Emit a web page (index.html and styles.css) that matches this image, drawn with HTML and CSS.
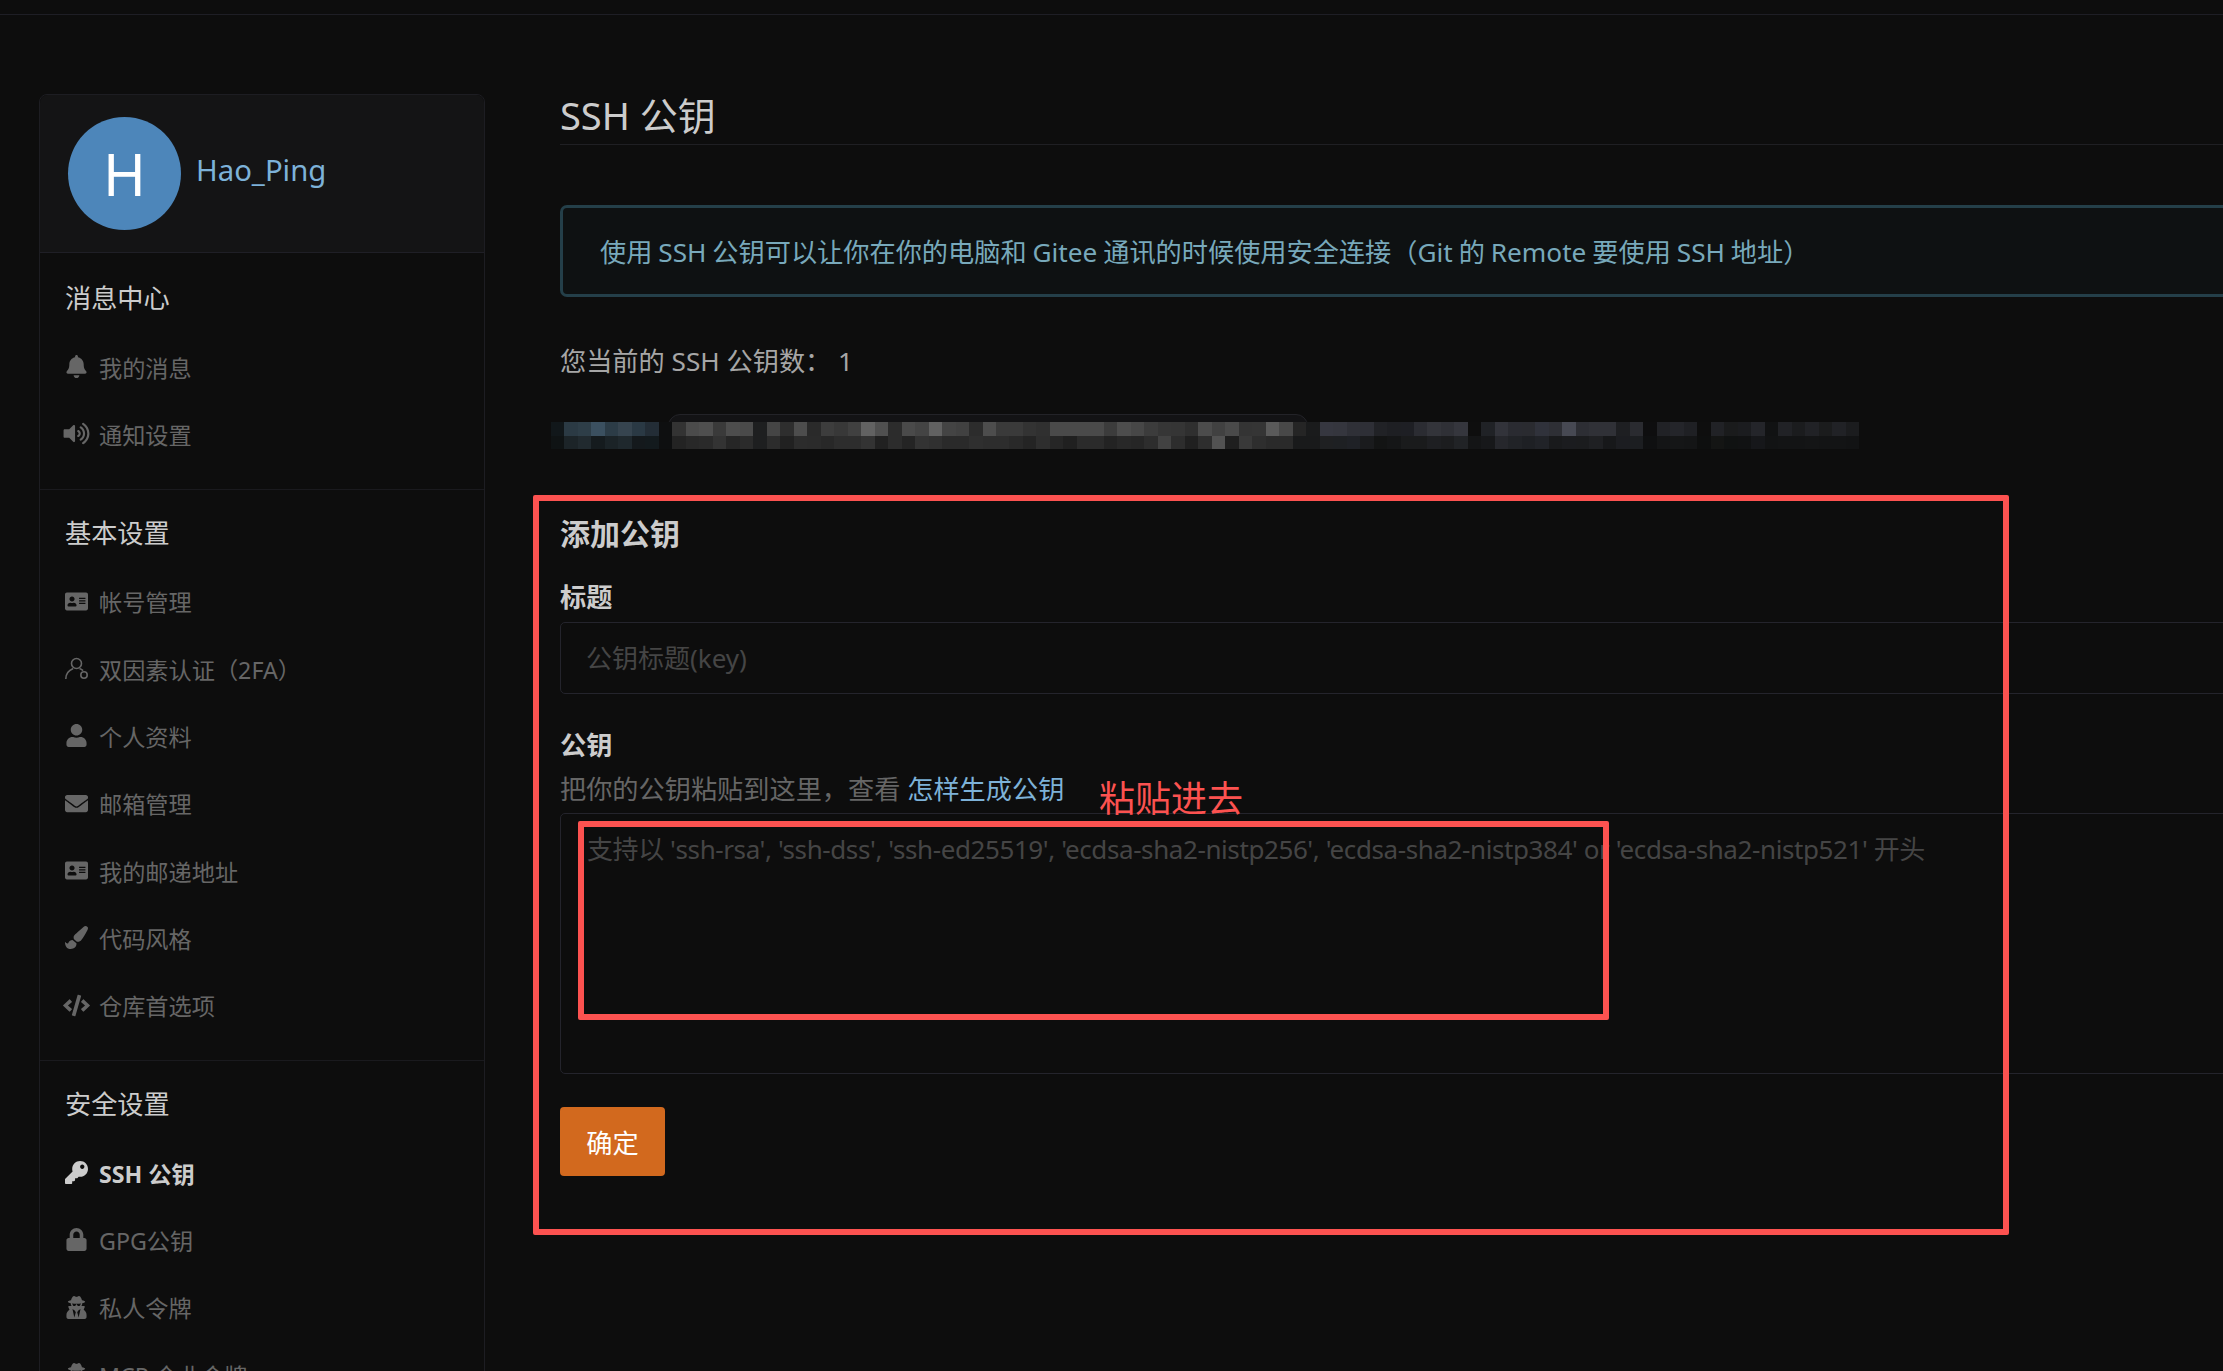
FILE: index.html
```html
<!DOCTYPE html>
<html lang="zh-CN">
<head>
<meta charset="utf-8">
<title>SSH 公钥</title>
<link rel="stylesheet" href="styles.css">
</head>
<body>
<svg class="defs" aria-hidden="true">
  <symbol id="i-bell" viewBox="0 0 448 512"><path d="M224 512c35.32 0 63.97-28.65 63.97-63.97H160.03C160.03 483.35 188.68 512 224 512zm215.39-149.71c-19.32-20.76-55.47-51.99-55.47-154.29 0-77.7-54.48-139.9-127.94-155.16V32c0-17.67-14.32-32-31.98-32s-31.98 14.33-31.98 32v20.84C118.56 68.1 64.08 130.3 64.08 208c0 102.3-36.15 133.53-55.47 154.29-6 6.45-8.66 14.16-8.61 21.71.11 16.4 12.98 32 32.1 32h383.8c19.12 0 32-15.6 32.1-32 .05-7.55-2.61-15.27-8.61-21.71z"/></symbol>
  <symbol id="i-volume" viewBox="0 0 576 512"><path d="M215.03 71.05L126.06 160H24c-13.26 0-24 10.74-24 24v144c0 13.25 10.74 24 24 24h102.06l88.97 88.95c15.03 15.03 40.97 4.47 40.97-16.97V88.02c0-21.46-25.96-31.98-40.97-16.97zm233.32-51.08c-11.17-7.33-26.18-4.24-33.51 6.95-7.34 11.17-4.22 26.18 6.95 33.51 66.27 43.49 105.82 116.6 105.82 195.58 0 78.98-39.55 152.09-105.82 195.58-11.17 7.32-14.29 22.34-6.95 33.5 7.04 10.71 21.93 14.56 33.51 6.95C528.27 439.58 576 351.33 576 256S528.27 72.43 448.35 19.97zM480 256c0-63.53-32.06-121.94-85.77-156.24-11.19-7.14-26.03-3.82-33.12 7.46s-3.78 26.21 7.41 33.36C408.27 165.97 432 209.11 432 256s-23.73 90.03-63.48 115.42c-11.19 7.14-14.5 22.07-7.41 33.36 6.51 10.36 21.12 15.14 33.12 7.46C447.94 377.94 480 319.53 480 256zm-141.77-76.87c-11.58-6.33-26.19-2.16-32.61 9.45-6.39 11.61-2.16 26.2 9.45 32.61C327.98 228.28 336 241.63 336 256c0 14.38-8.02 27.72-20.92 34.81-11.61 6.41-15.84 21-9.45 32.61 6.43 11.66 21.05 15.8 32.61 9.45 28.23-15.55 45.77-45 45.77-76.88s-17.54-61.32-45.78-76.86z"/></symbol>
  <symbol id="i-card" viewBox="0 0 576 512"><path d="M528 32H48C21.5 32 0 53.5 0 80v352c0 26.5 21.5 48 48 48h480c26.5 0 48-21.5 48-48V80c0-26.5-21.5-48-48-48zm-352 96c35.3 0 64 28.7 64 64s-28.7 64-64 64-64-28.7-64-64 28.7-64 64-64zm112 236.8c0 10.6-10 19.2-22.4 19.2H86.4C74 384 64 375.4 64 364.8v-19.2c0-31.8 30.1-57.6 67.2-57.6h5c12.3 5.1 25.7 8 39.8 8s27.6-2.9 39.8-8h5c37.1 0 67.2 25.8 67.2 57.6v19.2zM512 312c0 4.4-3.6 8-8 8H360c-4.4 0-8-3.6-8-8v-16c0-4.4 3.6-8 8-8h144c4.4 0 8 3.6 8 8v16zm0-64c0 4.4-3.6 8-8 8H360c-4.4 0-8-3.6-8-8v-16c0-4.4 3.6-8 8-8h144c4.4 0 8 3.6 8 8v16zm0-64c0 4.4-3.6 8-8 8H360c-4.4 0-8-3.6-8-8v-16c0-4.4 3.6-8 8-8h144c4.4 0 8 3.6 8 8v16z"/></symbol>
  <symbol id="i-2fa" viewBox="0 0 23 23"><g fill="none" stroke="currentColor" stroke-width="1.6"><circle cx="11.5" cy="6.5" r="5"/><path d="M.8 22c0-5 3-8.6 7.4-10.4M14.5 11.4c1.4.5 2.6 1.3 3.6 2.2"/><circle cx="19" cy="18" r="3.2"/></g></symbol>
  <symbol id="i-user" viewBox="0 0 448 512"><path d="M224 256c70.7 0 128-57.3 128-128S294.7 0 224 0 96 57.3 96 128s57.3 128 128 128zm89.6 32h-16.7c-22.2 10.2-46.9 16-72.9 16s-50.6-5.8-72.9-16h-16.7C60.2 288 0 348.2 0 422.4V464c0 26.5 21.5 48 48 48h352c26.5 0 48-21.5 48-48v-41.6c0-74.2-60.2-134.4-134.4-134.4z"/></symbol>
  <symbol id="i-mail" viewBox="0 0 512 512"><path d="M502.3 190.8c3.9-3.1 9.7-.2 9.7 4.7V400c0 26.5-21.5 48-48 48H48c-26.5 0-48-21.5-48-48V195.6c0-5 5.7-7.8 9.7-4.7 22.4 17.4 52.1 39.5 154.1 113.6 21.1 15.4 56.7 47.8 92.2 47.6 35.7.3 72-32.8 92.3-47.6 102-74.1 131.6-96.3 154-113.7zM256 320c23.2.4 56.6-29.2 73.4-41.4 132.7-96.3 142.8-104.7 173.4-128.7 5.8-4.5 9.2-11.5 9.2-18.9v-19c0-26.5-21.5-48-48-48H48C21.5 64 0 85.5 0 112v19c0 7.4 3.4 14.3 9.2 18.9 30.6 23.9 40.7 32.4 173.4 128.7 16.8 12.2 50.2 41.8 73.4 41.4z"/></symbol>
  <symbol id="i-brush" viewBox="0 0 512 512"><path d="M167.02 309.34c-40.12 2.58-76.53 17.86-97.19 72.3-2.35 6.21-8 9.98-14.59 9.98-11.11 0-45.46-27.67-55.25-34.35C0 439.62 37.93 512 128 512c75.86 0 128-43.77 128-120.19 0-3.11-.65-6.08-.97-9.13l-88.01-73.34zM457.89 0c-15.16 0-29.37 6.71-40.21 16.45C213.27 199.05 192 203.34 192 257.09c0 13.7 3.25 26.76 8.73 38.7l63.82 53.18c7.21 1.8 14.64 3.03 22.39 3.03 62.11 0 98.11-45.47 211.16-256.46 7.38-14.35 13.9-29.85 13.9-45.99C512 20.64 486 0 457.89 0z"/></symbol>
  <symbol id="i-code" viewBox="0 0 640 512"><path d="M278.9 511.5l-61-17.7c-6.4-1.8-10-8.5-8.2-14.9L346.2 8.7c1.8-6.4 8.5-10 14.9-8.2l61 17.7c6.4 1.8 10 8.5 8.2 14.9L293.8 503.3c-1.9 6.4-8.5 10.1-14.9 8.2zm-114-112.2l43.5-46.4c4.6-4.9 4.3-12.7-.8-17.2L117 256l90.6-79.7c5.1-4.5 5.5-12.3.8-17.2l-43.5-46.4c-4.5-4.8-12.1-5.1-17-.5L3.8 247.2c-5.1 4.7-5.1 12.8 0 17.5l144.1 135.1c4.9 4.6 12.5 4.4 17-.5zm327.2.6l144.1-135.1c5.1-4.7 5.1-12.8 0-17.5L492.1 112.1c-4.8-4.5-12.4-4.3-17 .5L431.6 159c-4.6 4.9-4.3 12.7.8 17.2L523 256l-90.6 79.7c-5.1 4.5-5.5 12.3-.8 17.2l43.5 46.4c4.5 4.9 12.1 5.1 17 .6z"/></symbol>
  <symbol id="i-key" viewBox="0 0 512 512"><path d="M512 176.001C512 273.203 433.202 352 336 352c-11.22 0-22.19-1.062-32.827-3.069l-24.012 27.014A23.999 23.999 0 0 1 261.223 384H224v40c0 13.255-10.745 24-24 24h-40v40c0 13.255-10.745 24-24 24H24c-13.255 0-24-10.745-24-24v-78.059c0-6.365 2.529-12.47 7.029-16.971l161.802-161.802C163.108 213.814 160 195.271 160 176 160 78.798 238.797.001 335.999 0 433.488-.001 512 78.511 512 176.001zM336 128c0 26.51 21.49 48 48 48s48-21.49 48-48-21.49-48-48-48-48 21.49-48 48z"/></symbol>
  <symbol id="i-lock" viewBox="0 0 448 512"><path d="M400 224h-24v-72C376 68.2 307.8 0 224 0S72 68.2 72 152v72H48c-26.5 0-48 21.5-48 48v192c0 26.5 21.5 48 48 48h352c26.5 0 48-21.5 48-48V272c0-26.5-21.5-48-48-48zm-104 0H152v-72c0-39.7 32.3-72 72-72s72 32.3 72 72v72z"/></symbol>
  <symbol id="i-secret" viewBox="0 0 448 512"><path d="M383.9 308.3l23.9-62.6c4-10.5-3.7-21.7-15-21.7h-58.5c11-18.9 17.8-40.6 17.8-64v-.3c39.2-7.8 64-19.1 64-31.7 0-13.3-27.3-25.1-70.1-33-9.2-32.8-27-65.8-40.6-82.8-9.5-11.9-25.9-15.6-39.5-8.8l-27.6 13.8c-9 4.5-19.6 4.5-28.6 0L182.1 3.4c-13.6-6.8-30-3.1-39.5 8.8-13.5 17-31.4 50-40.6 82.8-42.7 7.9-70 19.7-70 33 0 12.6 24.8 23.9 64 31.7v.3c0 23.4 6.8 45.1 17.8 64H56.3c-11.5 0-19.2 11.7-14.7 22.3l25.8 60.2C27.3 329.8 0 372.7 0 422.4v44.8C0 491.9 20.1 512 44.8 512h358.4c24.7 0 44.8-20.1 44.8-44.8v-44.8c0-48.4-25.8-90.4-64.1-114.1zM176 480l-41.6-192 49.6 32 24 40-32 120zm96 0l-32-120 24-40 49.6-32L272 480zm41.7-298.5c-3.9 11.9-7 24.6-16.5 33.4-10.1 9.3-48 22.4-64-25-2.8-8.4-15.4-8.4-18.3 0-17 50.2-56 32.4-64 25-9.5-8.8-12.7-21.5-16.5-33.4-.8-2.5-6.3-5.7-6.3-5.8v-10.8c28.3 3.6 61 5.8 96 5.8s67.7-2.1 96-5.8v10.8c-.1.1-5.6 3.2-6.4 5.8z"/></symbol>
</svg>

<div class="topbar"></div>

<div class="page">
  <aside class="sidebar">
    <header class="profile">
      <span class="avatar">H</span>
      <a class="username" href="#">Hao_Ping</a>
    </header>

    <section class="group group-first">
      <h3 class="group-title">消息中心</h3>
      <a class="item" href="#"><svg class="icon"><use href="#i-bell"/></svg>我的消息</a>
      <a class="item" href="#"><svg class="icon icon-wide"><use href="#i-volume"/></svg>通知设置</a>
    </section>

    <section class="group">
      <h3 class="group-title">基本设置</h3>
      <a class="item" href="#"><svg class="icon"><use href="#i-card"/></svg>帐号管理</a>
      <a class="item" href="#"><svg class="icon"><use href="#i-2fa"/></svg>双因素认证（2FA）</a>
      <a class="item" href="#"><svg class="icon"><use href="#i-user"/></svg>个人资料</a>
      <a class="item" href="#"><svg class="icon"><use href="#i-mail"/></svg>邮箱管理</a>
      <a class="item" href="#"><svg class="icon"><use href="#i-card"/></svg>我的邮递地址</a>
      <a class="item" href="#"><svg class="icon"><use href="#i-brush"/></svg>代码风格</a>
      <a class="item" href="#"><svg class="icon icon-wide"><use href="#i-code"/></svg>仓库首选项</a>
    </section>

    <section class="group">
      <h3 class="group-title">安全设置</h3>
      <a class="item item-active" href="#"><svg class="icon"><use href="#i-key"/></svg>SSH 公钥</a>
      <a class="item" href="#"><svg class="icon"><use href="#i-lock"/></svg>GPG公钥</a>
      <a class="item" href="#"><svg class="icon"><use href="#i-secret"/></svg>私人令牌</a>
      <a class="item" href="#"><svg class="icon"><use href="#i-secret"/></svg>MCP 企业令牌</a>
    </section>
  </aside>

  <main class="main">
    <h1 class="page-title">SSH 公钥</h1>

    <div class="alert">使用 SSH 公钥可以让你在你的电脑和 Gitee 通讯的时候使用安全连接（Git 的 Remote 要使用 SSH 地址）</div>

    <p class="key-count">您当前的 SSH 公钥数： 1</p>

    <div class="key-row">
      <div class="key-tag"></div>
      <svg class="mosaic" viewBox="0 0 97 2" preserveAspectRatio="none" aria-hidden="true">
        <g>
          <rect x="0" fill="#11171a"/><rect x="1" fill="#2b3a44"/><rect x="2" fill="#2e3e48"/><rect x="3" fill="#3b5060"/><rect x="4" fill="#2c3c47"/><rect x="5" fill="#36444f"/><rect x="6" fill="#2a3944"/><rect x="7" fill="#232d36"/><rect x="8" fill="#0e0f10"/><rect x="9" fill="#333333"/>
          <rect x="10" fill="#4b4b4b"/><rect x="11" fill="#4f4f4f"/><rect x="12" fill="#3a3a3a"/><rect x="13" fill="#4d4d4d"/><rect x="14" fill="#4a4a4a"/><rect x="15" fill="#1e1f20"/><rect x="16" fill="#454545"/><rect x="17" fill="#2e2e2e"/><rect x="18" fill="#4d4d4d"/><rect x="19" fill="#2a2a2a"/>
          <rect x="20" fill="#3d3d3d"/><rect x="21" fill="#383838"/><rect x="22" fill="#404040"/><rect x="23" fill="#626262"/><rect x="24" fill="#505050"/><rect x="25" fill="#2c2c2c"/><rect x="26" fill="#4a4a4a"/><rect x="27" fill="#444444"/><rect x="28" fill="#616161"/><rect x="29" fill="#444444"/>
          <rect x="30" fill="#414141"/><rect x="31" fill="#2c2c2c"/><rect x="32" fill="#4d4d4d"/><rect x="33" fill="#3a3a3a"/><rect x="34" fill="#3a3a3a"/><rect x="35" fill="#333333"/><rect x="36" fill="#303030"/><rect x="37" fill="#4a4a4a"/><rect x="38" fill="#4a4a4a"/><rect x="39" fill="#4a4a4a"/>
          <rect x="40" fill="#4a4a4a"/><rect x="41" fill="#3c3c3c"/><rect x="42" fill="#4d4d4d"/><rect x="43" fill="#474747"/><rect x="44" fill="#3c3c3c"/><rect x="45" fill="#363636"/><rect x="46" fill="#353535"/><rect x="47" fill="#2f2f2f"/><rect x="48" fill="#4c4c4c"/><rect x="49" fill="#414141"/>
          <rect x="50" fill="#4a4a4a"/><rect x="51" fill="#343434"/><rect x="52" fill="#353535"/><rect x="53" fill="#5a5a5a"/><rect x="54" fill="#484848"/><rect x="55" fill="#252525"/><rect x="56" fill="#1a1b1c"/><rect x="57" fill="#363740"/><rect x="58" fill="#35363e"/><rect x="59" fill="#2f3037"/>
          <rect x="60" fill="#2e2f36"/><rect x="61" fill="#212226"/><rect x="62" fill="#1e1f23"/><rect x="63" fill="#1e1f24"/><rect x="64" fill="#2b2c32"/><rect x="65" fill="#33343a"/><rect x="66" fill="#2f3036"/><rect x="67" fill="#35363d"/><rect x="68" fill="#0e0e0e"/><rect x="69" fill="#202226"/>
          <rect x="70" fill="#32333a"/><rect x="71" fill="#2a2b31"/><rect x="72" fill="#2a2b30"/><rect x="73" fill="#30323b"/><rect x="74" fill="#2e2f35"/><rect x="75" fill="#474953"/><rect x="76" fill="#2d2e34"/><rect x="77" fill="#303137"/><rect x="78" fill="#303137"/><rect x="79" fill="#1e1f22"/>
          <rect x="80" fill="#2a2b30"/><rect x="81" fill="#0e0e0f"/><rect x="82" fill="#212226"/><rect x="83" fill="#24252a"/><rect x="84" fill="#1f2024"/><rect x="85" fill="#0e0e0e"/><rect x="86" fill="#212226"/><rect x="87" fill="#1a1b1c"/><rect x="88" fill="#1b1c1f"/><rect x="89" fill="#24252a"/>
          <rect x="90" fill="#111213"/><rect x="91" fill="#212226"/><rect x="92" fill="#1b1c1e"/><rect x="93" fill="#212226"/><rect x="94" fill="#1b1c1d"/><rect x="95" fill="#212226"/><rect x="96" fill="#1b1c1e"/>
        </g>
        <g transform="translate(0 1)">
          <rect x="0" fill="#0f1314"/><rect x="1" fill="#1c2428"/><rect x="2" fill="#212a2f"/><rect x="3" fill="#151b1e"/><rect x="4" fill="#1b2327"/><rect x="5" fill="#1f282d"/><rect x="6" fill="#14191c"/><rect x="7" fill="#131a1d"/><rect x="8" fill="#0e0f10"/><rect x="9" fill="#232323"/>
          <rect x="10" fill="#282828"/><rect x="11" fill="#2a2a2a"/><rect x="12" fill="#333333"/><rect x="13" fill="#262626"/><rect x="14" fill="#2b2b2b"/><rect x="15" fill="#1e1f20"/><rect x="16" fill="#2c2c2c"/><rect x="17" fill="#212121"/><rect x="18" fill="#2c2c2c"/><rect x="19" fill="#2b2b2b"/>
          <rect x="20" fill="#282828"/><rect x="21" fill="#2d2d2d"/><rect x="22" fill="#2d2d2d"/><rect x="23" fill="#333333"/><rect x="24" fill="#212121"/><rect x="25" fill="#2c2c2c"/><rect x="26" fill="#242424"/><rect x="27" fill="#333333"/><rect x="28" fill="#303030"/><rect x="29" fill="#2a2a2a"/>
          <rect x="30" fill="#2a2a2a"/><rect x="31" fill="#2f2f2f"/><rect x="32" fill="#2d2d2d"/><rect x="33" fill="#2d2d2d"/><rect x="34" fill="#292929"/><rect x="35" fill="#242424"/><rect x="36" fill="#2e2e2e"/><rect x="37" fill="#262626"/><rect x="38" fill="#202020"/><rect x="39" fill="#2b2b2b"/>
          <rect x="40" fill="#2b2b2b"/><rect x="41" fill="#232323"/><rect x="42" fill="#282828"/><rect x="43" fill="#262626"/><rect x="44" fill="#2d2d2d"/><rect x="45" fill="#424242"/><rect x="46" fill="#2d2d2d"/><rect x="47" fill="#202020"/><rect x="48" fill="#2e2e2e"/><rect x="49" fill="#525252"/>
          <rect x="50" fill="#1f1f1f"/><rect x="51" fill="#393939"/><rect x="52" fill="#2e2e2e"/><rect x="53" fill="#2a2a2a"/><rect x="54" fill="#2a2a2a"/><rect x="55" fill="#191a1b"/><rect x="56" fill="#191a1b"/><rect x="57" fill="#1f2022"/><rect x="58" fill="#1e2023"/><rect x="59" fill="#1f2126"/>
          <rect x="60" fill="#1a1b1d"/><rect x="61" fill="#131414"/><rect x="62" fill="#151617"/><rect x="63" fill="#1a1b1c"/><rect x="64" fill="#1a1b1c"/><rect x="65" fill="#1e1f22"/><rect x="66" fill="#1c1d1f"/><rect x="67" fill="#212326"/><rect x="68" fill="#141516"/><rect x="69" fill="#17181a"/>
          <rect x="70" fill="#26272c"/><rect x="71" fill="#212327"/><rect x="72" fill="#1e2024"/><rect x="73" fill="#212328"/><rect x="74" fill="#191a1c"/><rect x="75" fill="#1b1c1f"/><rect x="76" fill="#1b1c1e"/><rect x="77" fill="#1f2023"/><rect x="78" fill="#17181a"/><rect x="79" fill="#1c1d21"/>
          <rect x="80" fill="#1c1e21"/><rect x="81" fill="#0f1011"/><rect x="82" fill="#141516"/><rect x="83" fill="#151617"/><rect x="84" fill="#141516"/><rect x="85" fill="#0e0f0f"/><rect x="86" fill="#141514"/><rect x="87" fill="#101212"/><rect x="88" fill="#111213"/><rect x="89" fill="#16171a"/>
          <rect x="90" fill="#121314"/><rect x="91" fill="#131415"/><rect x="92" fill="#131415"/><rect x="93" fill="#141516"/><rect x="94" fill="#131415"/><rect x="95" fill="#131415"/><rect x="96" fill="#121314"/>
        </g>
      </svg>
    </div>

    <form class="key-form">
      <h3 class="form-title">添加公钥</h3>
      <label class="field-label field-label-first" for="key-title">标题</label>
      <input class="field field-input" id="key-title" type="text" placeholder="公钥标题(key)">
      <label class="field-label field-label-second" for="key-body">公钥</label>
      <p class="field-help">把你的公钥粘贴到这里，查看 <a class="help-link" href="#">怎样生成公钥</a></p>
      <textarea class="field field-textarea" id="key-body" placeholder="支持以 'ssh-rsa', 'ssh-dss', 'ssh-ed25519', 'ecdsa-sha2-nistp256', 'ecdsa-sha2-nistp384' or 'ecdsa-sha2-nistp521' 开头"></textarea>
      <button class="submit" type="button">确定</button>
    </form>
  </main>
</div>

<div class="mark mark-form"></div>
<div class="mark mark-field"></div>
<div class="mark-label">粘贴进去</div>
</body>
</html>
```
FILE: styles.css
```css
* { box-sizing: border-box; }

html, body {
  margin: 0;
  height: 1371px;
  overflow: hidden;
  background: #0d0d0d;
}

body {
  position: relative;
  width: 2223px;
  font-family: "Noto Sans", "Noto Sans CJK SC", sans-serif;
  font-size: 26.2px;
  color: #ccc;
}

a { text-decoration: none; color: inherit; }

.defs { display: none; }

.topbar {
  height: 15px;
  border-bottom: 1px solid #1e1e25;
}

.page {
  display: flex;
  align-items: flex-start;
  gap: 75px;
  padding: 75px 0 0 39px;
  width: 2500px;
}

/* sidebar */
.sidebar {
  flex: none;
  width: 446px;
  margin-top: 4px;
  border: 1px solid #1d1d22;
  border-radius: 8px 8px 0 0;
}

.profile {
  display: flex;
  align-items: center;
  height: 158px;
  padding-left: 28px;
  background: #141415;
  border-bottom: 1px solid #1f1f26;
  border-radius: 8px 8px 0 0;
}

.avatar {
  display: flex;
  align-items: center;
  justify-content: center;
  width: 113px;
  height: 113px;
  border-radius: 50%;
  background: #4d86ba;
  color: #fff;
  font-size: 58px;
  line-height: 1;
}

.username {
  margin-left: 15px;
  padding-bottom: 7px;
  font-size: 29.3px;
  color: #7db2d8;
}

.group {
  padding: 28px 0 21px 25px;
  border-bottom: 1px solid #1a1a1e;
}

.group-first { padding-top: 30px; }
.group:last-child { border-bottom: 0; }

.group-title {
  margin: 0 0 20px;
  font-size: 26.2px;
  font-weight: 400;
  line-height: 30px;
  color: #ccc;
}

.item {
  display: flex;
  align-items: center;
  height: 67.33px;
  font-size: 23.2px;
  color: #666;
}

.icon {
  flex: none;
  width: 23px;
  height: 23px;
  margin-right: 11px;
  fill: currentColor;
}

.icon-wide {
  width: 27px;
  margin-left: -2px;
  margin-right: 9px;
}

.item-active {
  font-weight: 700;
  color: #ccc;
}

/* main */
.main {
  flex: none;
  width: 1800px;
}

.page-title {
  margin: 0;
  height: 55px;
  border-bottom: 1px solid #1f1f23;
  font-size: 38px;
  font-weight: 400;
  line-height: 50px;
  color: #ccc;
}

.alert {
  margin-top: 60px;
  height: 92px;
  padding-left: 37px;
  display: flex;
  align-items: center;
  border: 3px solid #243f49;
  border-radius: 7px;
  background: #0e1112;
  color: #78a9bb;
  word-spacing: -0.9px;
}

.key-count {
  margin: 46px 0 0;
  line-height: 36px;
  color: #a6a6a6;
}

.key-row {
  position: relative;
  margin-top: 35px;
  height: 35px;
}

.key-tag {
  width: 640px;
  height: 35px;
  margin-left: 108px;
  background: #131315;
  border: 1px solid #232328;
  border-radius: 12px;
}

.mosaic {
  position: absolute;
  left: -9px;
  top: 8px;
  width: 1308px;
  height: 27px;
  shape-rendering: crispEdges;
}

.mosaic rect {
  y: 0;
  width: 1.02px;
  height: 1px;
}

.key-form { margin-top: 65px; }

.form-title {
  margin: 0;
  font-size: 30px;
  font-weight: 700;
  line-height: 40px;
  color: #ccc;
}

.field-label {
  display: block;
  font-weight: 700;
  line-height: 32px;
  color: #ccc;
}

.field-label-first { margin-top: 27px; }
.field-label-second { margin-top: 35px; }

.field {
  display: block;
  width: 100%;
  background: #0d0d0d;
  border: 1px solid #24242c;
  border-radius: 5px;
  color: #ccc;
  font: inherit;
  font-size: 26px;
  outline: none;
  resize: none;
}

.field::placeholder {
  color: #454545;
  opacity: 1;
}

.field-input {
  margin-top: 9px;
  height: 72px;
  padding: 0 25px;
}

.field-help {
  margin: 12px 0 0;
  line-height: 32px;
  color: #666;
}

.help-link { color: #7db2d8; }

.field-textarea {
  margin-top: 8px;
  height: 261px;
  padding: 17px 26px;
  line-height: 36px;
}

.field-textarea::placeholder { letter-spacing: -0.41px; }

.submit {
  display: block;
  margin-top: 33px;
  width: 105px;
  height: 69px;
  border: 0;
  border-radius: 4px;
  background: #d2691e;
  color: #fff;
  font: inherit;
}

/* hand-drawn red annotations lying over the page */
.mark {
  position: absolute;
  border: 6px solid #fc5250;
  border-radius: 2px;
}

.mark-form {
  left: 533px;
  top: 495px;
  width: 1476px;
  height: 740px;
}

.mark-field {
  left: 578px;
  top: 821px;
  width: 1031px;
  height: 199px;
}

.mark-label {
  position: absolute;
  left: 1099px;
  top: 775px;
  font-size: 36px;
  line-height: 48px;
  color: #fc5250;
}
```
